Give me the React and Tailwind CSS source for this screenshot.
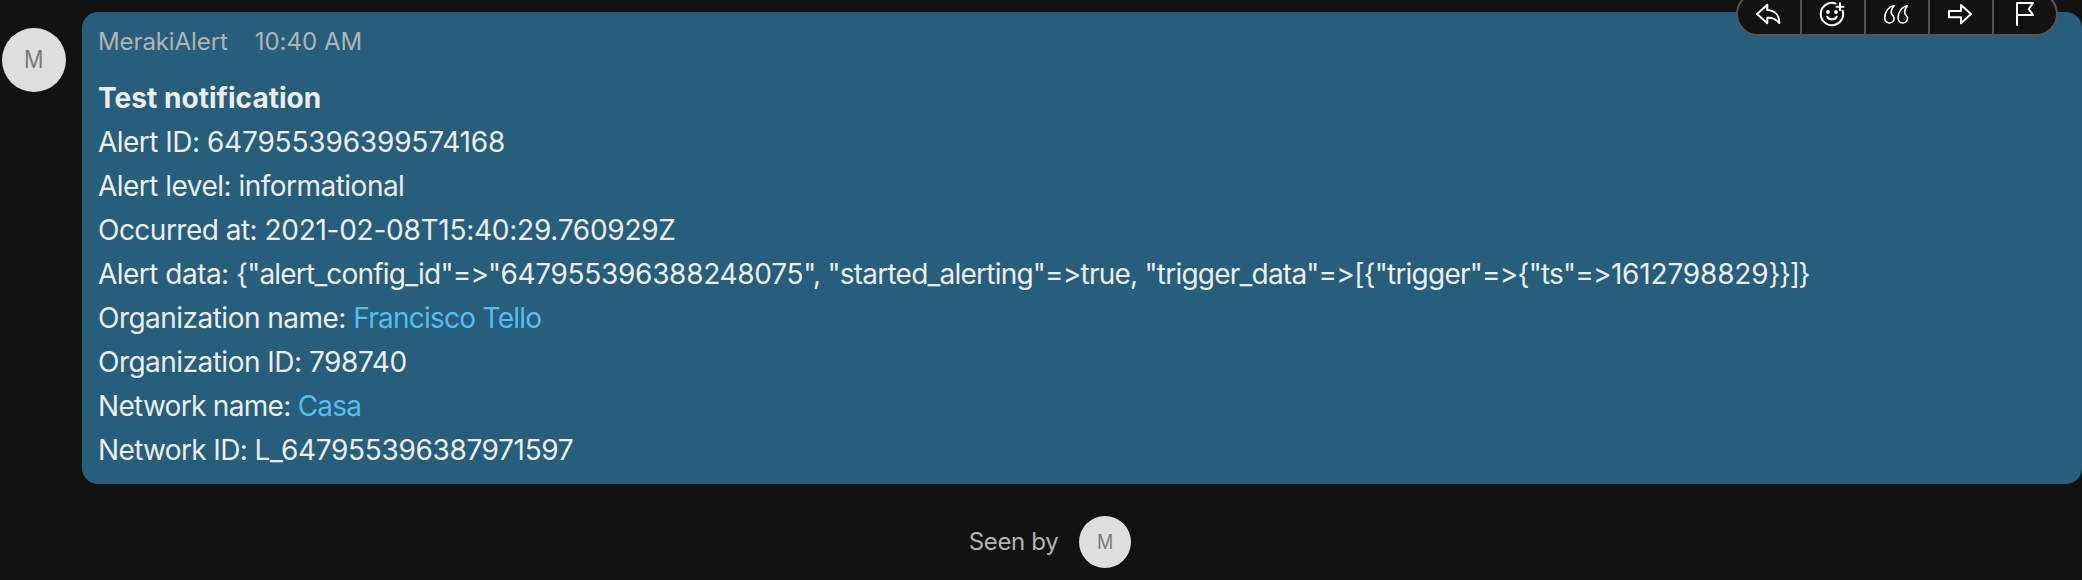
import React from "react";

const stroke = { fill: "none", stroke: "#fff", strokeWidth: 2, strokeLinejoin: "round", strokeLinecap: "round" };

function Cell({ last, children }) {
  return (
    <div className={last ? "h-11" : "h-11 border-r-2 border-[#555]"}>
      <svg className="block h-11 w-[62px]" viewBox="0 0 62 44" {...stroke}>
        {children}
      </svg>
    </div>
  );
}

function Toolbar() {
  return (
    <div className="absolute -top-2 right-6 flex h-11 items-center overflow-hidden rounded-[22px] border-2 border-[#555] bg-[#121212]">
      <Cell>
        <path d="M29.300 12.800 L19 22 L29.300 31.200 V25.800 C34 25.200 38 27 41.300 31 C41.500 23.500 37 18.500 29.300 18 Z" />
      </Cell>
      <Cell>
        <path d="M33.500 11.400 A11.200 11.200 0 1 0 40.600 18.600" />
        <path d="M38 11.300 V18.300 M34.500 14.800 H41.500" />
        <path d="M25.300 24.700 C27 28.200 33 28.200 34.700 24.700" />
        <circle cx="26" cy="20" r="1.900" fill="#fff" stroke="none" />
        <circle cx="34" cy="20" r="1.900" fill="#fff" stroke="none" />
      </Cell>
      <Cell>
        <g strokeWidth="1.600">
          <path d="M28 13.700 C22 14.500 18.700 20.500 18.700 26 A4.700 4.700 0 0 0 28.100 26.500 C28.100 24 25.200 23 25.200 20 C25.200 17.500 26.500 15.500 28 13.700 Z" />
          <path d="M41.400 13.700 C35.400 14.500 32.100 20.500 32.100 26 A4.700 4.700 0 0 0 41.500 26.500 C41.500 24 38.600 23 38.600 20 C38.600 17.500 39.900 15.500 41.400 13.700 Z" />
        </g>
      </Cell>
      <Cell>
        <path d="M19 19 H31 V13 L41 22 L31 31.200 V25.200 H19 Z" />
      </Cell>
      <Cell last>
        <path d="M23 33 V11 H39 L34.800 17 L39 23 H23" />
      </Cell>
    </div>
  );
}

export default function App() {
  return (
    <div className="relative h-[580px] w-[2082px] overflow-hidden bg-[#121212] font-['Inter',sans-serif] whitespace-nowrap text-[#ededed] [font-feature-settings:'calt'_0]">
      <div className="flex pt-3 pl-0.5">
        <div className="mt-4 mr-4 flex size-16 shrink-0 items-center justify-center rounded-full bg-[#dedede] text-2xl text-[#7a7a7a]">
          <span className="scale-x-90">M</span>
        </div>
        <div className="h-[472px] flex-1 rounded-2xl bg-[#265e7b] px-4 pt-3">
          <div className="flex h-9 items-center gap-[27px] text-2xl text-[#b3b3b3]">
            <span className="tracking-[-0.1px]">MerakiAlert</span>
            <span>10:40 AM</span>
          </div>
          <div className="mt-4 text-[28px] leading-[44px] tracking-[-0.52px]">
            <div className="font-bold tracking-[0.04px]">Test notification</div>
            <div>Alert ID: <span className="tracking-[-0.17px]">647955396399574168</span></div>
            <div>Alert level: informational</div>
            <div>Occurred at: <span className="tracking-[-0.26px]">2021-02-08T15:40:29.760929Z</span></div>
            <div>
              {"Alert data: "}
              <span className="tracking-[-0.8px]">{'{"alert_config_id"=>"'}</span>
              <span className="tracking-[-0.3px]">647955396388248075</span>
              <span className="tracking-[-0.77px]">{'", "started_alerting"=>true, "trigger_data"=>[{"trigger"=>{"ts"=>'}</span>
              <span className="tracking-[-0.17px]">1612798829</span>
              <span className="tracking-[-1.3px]">{"}}]}"}</span>
            </div>
            <div>Organization name: <a className="tracking-[-0.74px] text-[#55bdf0]">Francisco Tello</a></div>
            <div>Organization ID: <span className="tracking-[-0.4px]">798740</span></div>
            <div><span className="tracking-[-0.7px]">Network name: </span><a className="tracking-[-0.8px] text-[#55bdf0]">Casa</a></div>
            <div><span className="tracking-[-0.64px]">Network ID: </span><span className="tracking-[-0.34px]">L_647955396387971597</span></div>
          </div>
        </div>
      </div>
      <div className="mt-8 flex items-center justify-center gap-[21px] pl-[18px] text-2xl text-[#b3b3b3]">
        <span className="tracking-[-0.35px]">Seen by</span>
        <div className="flex size-[52px] items-center justify-center rounded-full bg-[#dedede] text-xl text-[#7a7a7a]">
          <span className="scale-x-90">M</span>
        </div>
      </div>
      <Toolbar />
    </div>
  );
}
